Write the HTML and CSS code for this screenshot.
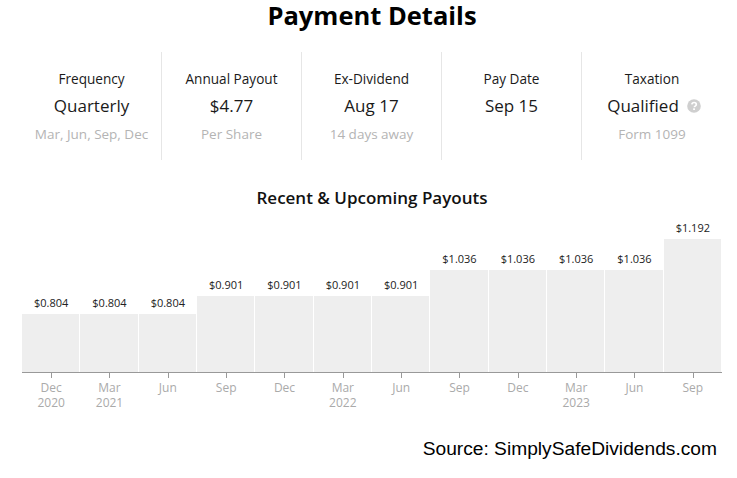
FILE: index.html
```html
<!DOCTYPE html>
<html lang="en">
<head>
<meta charset="utf-8">
<title>Payment Details</title>
<link rel="stylesheet" href="styles.css">
</head>
<body>
<main class="page">
  <h1 class="title">Payment Details</h1>
  <section class="stats">
    <div class="stat"><div class="stat-label">Frequency</div><div class="stat-value">Quarterly</div><div class="stat-note">Mar, Jun, Sep, Dec</div></div>
    <div class="stat"><div class="stat-label">Annual Payout</div><div class="stat-value">$4.77</div><div class="stat-note">Per Share</div></div>
    <div class="stat"><div class="stat-label">Ex-Dividend</div><div class="stat-value">Aug 17</div><div class="stat-note">14 days away</div></div>
    <div class="stat"><div class="stat-label">Pay Date</div><div class="stat-value">Sep 15</div></div>
    <div class="stat"><div class="stat-label">Taxation</div><div class="stat-value">Qualified<svg class="help" viewBox="0 0 14 14" width="14" height="14" aria-hidden="true"><circle cx="7" cy="7" r="6.8" fill="#cfcfcf"/><path d="M4.8 5.4C5 4.2 5.9 3.5 7.1 3.5c1.300 0 2.200.8 2.200 1.900 0 .9-.5 1.300-1.100 1.700-.6.4-.8.6-.8 1.200" fill="none" stroke="#fff" stroke-width="1.700"/><rect x="6.150" y="9.300" width="1.800" height="1.700" fill="#fff"/></svg></div><div class="stat-note">Form 1099</div></div>
  </section>
  <h2 class="chart-title">Recent &amp; Upcoming Payouts</h2>
  <section class="chart">
    <div class="plot">
      <div class="col"><span class="amount">$0.804</span><div class="bar" style="height:58px"></div></div>
      <div class="col"><span class="amount">$0.804</span><div class="bar" style="height:58px"></div></div>
      <div class="col"><span class="amount">$0.804</span><div class="bar" style="height:58px"></div></div>
      <div class="col"><span class="amount">$0.901</span><div class="bar" style="height:76px"></div></div>
      <div class="col"><span class="amount">$0.901</span><div class="bar" style="height:76px"></div></div>
      <div class="col"><span class="amount">$0.901</span><div class="bar" style="height:76px"></div></div>
      <div class="col"><span class="amount">$0.901</span><div class="bar" style="height:76px"></div></div>
      <div class="col"><span class="amount">$1.036</span><div class="bar" style="height:102px"></div></div>
      <div class="col"><span class="amount">$1.036</span><div class="bar" style="height:102px"></div></div>
      <div class="col"><span class="amount">$1.036</span><div class="bar" style="height:102px"></div></div>
      <div class="col"><span class="amount">$1.036</span><div class="bar" style="height:102px"></div></div>
      <div class="col"><span class="amount">$1.192</span><div class="bar" style="height:133px"></div></div>
    </div>
    <div class="axis">
      <div class="tick">Dec<br>2020</div>
      <div class="tick">Mar<br>2021</div>
      <div class="tick">Jun</div>
      <div class="tick">Sep</div>
      <div class="tick">Dec</div>
      <div class="tick">Mar<br>2022</div>
      <div class="tick">Jun</div>
      <div class="tick">Sep</div>
      <div class="tick">Dec</div>
      <div class="tick">Mar<br>2023</div>
      <div class="tick">Jun</div>
      <div class="tick">Sep</div>
    </div>
  </section>
  <p class="source">Source: SimplySafeDividends.com</p>
</main>
</body>
</html>
```
FILE: styles.css
```css
* { box-sizing: border-box; }
html, body { margin: 0; padding: 0; background: #fff; }
body { font-family: "Open Sans", sans-serif; color: #111; }
.page { width: 737px; height: 478px; overflow: hidden; padding: 0 15px 0 22px; }
.title { margin: 0; height: 52px; font-size: 25.5px; line-height: 31px; font-weight: 700; color: #000; text-align: center; }
.stats { display: grid; grid-template-columns: repeat(5, 140px); height: 108px; }
.stat { padding-top: 17px; text-align: center; border-right: 1px solid #e6e6e6; }
.stat:last-child { border-right: 0; }
.stat-label { font-size: 13.6px; line-height: 20px; color: #1a1a1a; }
.stat-value { margin-top: 5px; font-size: 17px; line-height: 24px; color: #1a1a1a; }
.stat-note { margin-top: 6px; font-size: 13.5px; line-height: 20px; color: #b4b4b4; }
.help { margin: 0 -4px 0 8px; vertical-align: -1px; }
.chart-title { margin: 27px 0 0; font-size: 17px; line-height: 22px; font-weight: 600; color: #111; text-align: center; }
.chart { width: 700px; margin-top: 8px; }
.plot { display: grid; grid-template-columns: repeat(12, 1fr); height: 156px; align-items: end; border-bottom: 1px solid #999; }
.col { display: flex; flex-direction: column; align-items: flex-start; }
.amount { align-self: center; font-size: 11px; line-height: 15px; margin-bottom: 4px; color: #222; }
.bar { width: calc(100% - 1px); background: #eee; }
.axis { display: grid; grid-template-columns: repeat(12, 1fr); }
.tick { position: relative; padding-top: 7px; font-size: 12px; line-height: 15px; color: #aaa; text-align: center; }
.tick::before { content: ""; position: absolute; left: 50%; top: 0; width: 1px; height: 5px; background: #999; }
.source { margin: 28px 5px 0 0; font-family: "Liberation Sans", Arial, sans-serif; font-size: 19.2px; line-height: 22px; color: #000; text-align: right; }
```
